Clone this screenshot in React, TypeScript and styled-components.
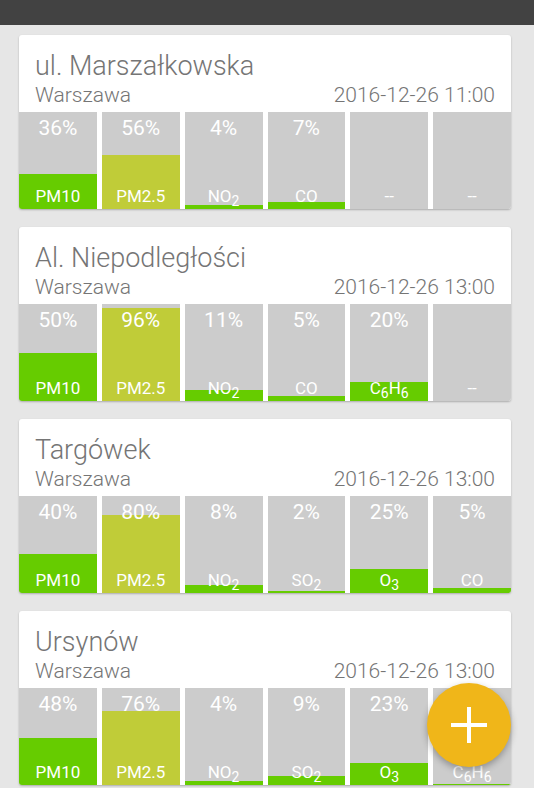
import React, { FC } from 'react';
import styled, { createGlobalStyle } from 'styled-components';

interface Reading {
  label: React.ReactNode;
  value?: number;
}

interface Station {
  name: string;
  city: string;
  time: string;
  readings: Reading[];
}

const GlobalStyle = createGlobalStyle`
  html, body {
    margin: 0;
    padding: 0;
    overflow: hidden;
    background: #e6e6e6;
  }
  body {
    font-family: Roboto, "Noto Sans", sans-serif;
  }
`;

const Screen = styled.div`
  position: relative;
  width: 534px;
  height: 788px;
  overflow: hidden;
  background: #e6e6e6;
`;

const TopBar = styled.div`
  height: 25px;
  background: #424242;
`;

const List = styled.div`
  display: flex;
  flex-direction: column;
  gap: 18px;
  padding: 10px 0 0 19px;
`;

const Card = styled.div`
  width: 492px;
  height: 174px;
  background: #fff;
  border-radius: 3px;
  overflow: hidden;
  box-shadow: 0 1px 2px rgba(0, 0, 0, 0.25);
  flex-shrink: 0;
`;

const Header = styled.div`
  box-sizing: border-box;
  height: 77px;
  padding: 16px 16px 0;
  color: #757575;
`;

const Title = styled.div`
  font-size: 27px;
  font-weight: 300;
  line-height: 31px;
  white-space: nowrap;
`;

const SubRow = styled.div`
  display: flex;
  justify-content: space-between;
  margin-top: 1px;
  font-size: 21px;
  font-weight: 300;
  line-height: 24px;
`;

const Bars = styled.div`
  display: grid;
  grid-template-columns: repeat(6, 1fr);
  gap: 5px;
  height: 97px;
`;

const Bar = styled.div`
  position: relative;
  display: flex;
  flex-direction: column;
  justify-content: space-between;
  align-items: center;
  box-sizing: border-box;
  padding: 4px 0 3px;
  background: #cccccc;
  color: #fff;
`;

const Fill = styled.div<{ $high: boolean }>`
  position: absolute;
  left: 0;
  right: 0;
  bottom: 0;
  background: ${(p) => (p.$high ? '#c0cc38' : '#66cc00')};
`;

const Percent = styled.div`
  position: relative;
  font-size: 21px;
  font-weight: 400;
  line-height: 24px;
  height: 24px;
`;

const Label = styled.div`
  position: relative;
  font-size: 17px;
  line-height: 20px;
  height: 20px;
  white-space: nowrap;

  sub {
    font-size: 14px;
    line-height: 0;
    vertical-align: -4px;
  }
`;

const Fab = styled.button`
  position: absolute;
  right: 23px;
  bottom: 21px;
  width: 84px;
  height: 84px;
  border: none;
  border-radius: 50%;
  background: #f0b619;
  box-shadow: 0 3px 7px rgba(0, 0, 0, 0.3);
  display: flex;
  align-items: center;
  justify-content: center;
  padding: 0;
  cursor: pointer;
`;

const NO2 = <>NO<sub>2</sub></>;
const SO2 = <>SO<sub>2</sub></>;
const O3 = <>O<sub>3</sub></>;
const C6H6 = <>C<sub>6</sub>H<sub>6</sub></>;

const stations: Station[] = [
  {
    name: 'ul. Marszałkowska',
    city: 'Warszawa',
    time: '2016-12-26 11:00',
    readings: [
      { label: 'PM10', value: 36 },
      { label: 'PM2.5', value: 56 },
      { label: NO2, value: 4 },
      { label: 'CO', value: 7 },
      { label: '--' },
      { label: '--' },
    ],
  },
  {
    name: 'Al. Niepodległości',
    city: 'Warszawa',
    time: '2016-12-26 13:00',
    readings: [
      { label: 'PM10', value: 50 },
      { label: 'PM2.5', value: 96 },
      { label: NO2, value: 11 },
      { label: 'CO', value: 5 },
      { label: C6H6, value: 20 },
      { label: '--' },
    ],
  },
  {
    name: 'Targówek',
    city: 'Warszawa',
    time: '2016-12-26 13:00',
    readings: [
      { label: 'PM10', value: 40 },
      { label: 'PM2.5', value: 80 },
      { label: NO2, value: 8 },
      { label: SO2, value: 2 },
      { label: O3, value: 25 },
      { label: 'CO', value: 5 },
    ],
  },
  {
    name: 'Ursynów',
    city: 'Warszawa',
    time: '2016-12-26 13:00',
    readings: [
      { label: 'PM10', value: 48 },
      { label: 'PM2.5', value: 76 },
      { label: NO2, value: 4 },
      { label: SO2, value: 9 },
      { label: O3, value: 23 },
      { label: C6H6, value: 1 },
    ],
  },
];

const StationCard: FC<{ station: Station }> = ({ station }) => (
  <Card>
    <Header>
      <Title>{station.name}</Title>
      <SubRow>
        <span>{station.city}</span>
        <span>{station.time}</span>
      </SubRow>
    </Header>
    <Bars>
      {station.readings.map((r, i) => (
        <Bar key={i}>
          {r.value !== undefined ? (
            <Fill $high={r.value > 50} style={{ height: `${r.value}%` }} />
          ) : null}
          <Percent>{r.value !== undefined ? `${r.value}%` : ''}</Percent>
          <Label>{r.label}</Label>
        </Bar>
      ))}
    </Bars>
  </Card>
);

const App: FC = () => (
  <Screen>
    <GlobalStyle />
    <TopBar />
    <List>
      {stations.map((s) => (
        <StationCard key={s.name} station={s} />
      ))}
    </List>
    <Fab aria-label="Add">
      <svg width="38" height="38" viewBox="0 0 38 38">
        <path d="M19 1v36M1 19h36" stroke="#fff" strokeWidth="4" fill="none" />
      </svg>
    </Fab>
  </Screen>
);

export default App;
